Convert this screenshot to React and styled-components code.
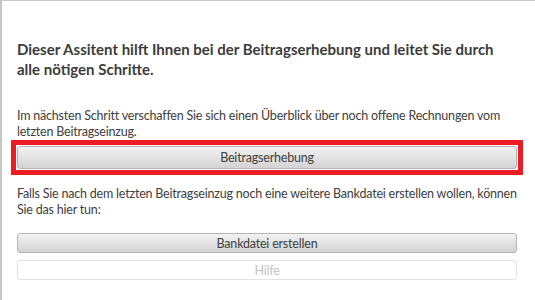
import React from "react";
import styled, { createGlobalStyle } from "styled-components";

const GlobalStyle = createGlobalStyle`
  html, body {
    margin: 0;
    padding: 0;
    background: #ffffff;
  }
  body {
    font-family: Lato, "Liberation Sans", sans-serif;
    color: #3f3f3f;
  }
`;

const StyledFrame = styled.div`
  box-sizing: border-box;
  width: 535px;
  height: 300px;
  border-top: 1px solid #c6c6c6;
  border-left: 2px solid #c6c6c6;
  padding: 38px 18px 0 15px;
  display: flex;
  flex-direction: column;
`;

const StyledHeading = styled.h1`
  margin: 0;
  font-size: 15px;
  line-height: 20px;
  font-weight: 700;
  color: #3c3c3c;
  white-space: nowrap;
`;

const StyledText = styled.p`
  margin: ${(p) => p.$top || 0}px 0 0;
  font-size: 12.5px;
  letter-spacing: -0.2px;
  line-height: 16px;
  color: #404040;
  white-space: nowrap;
`;

const StyledHighlight = styled.div`
  margin: 0 -6px;
  padding: 1px;
  border: 5px solid #ec1c24;
  display: flex;
  flex-direction: column;
`;

const StyledButton = styled.button`
  box-sizing: border-box;
  width: 100%;
  height: ${(p) => p.$height || 20}px;
  margin-top: ${(p) => p.$top || 0}px;
  padding: 0;
  font-family: Lato, "Liberation Sans", sans-serif;
  font-size: 12.5px;
  letter-spacing: -0.2px;
  color: #404040;
  border: 1px solid #b4b4b4;
  border-radius: 3px;
  background: linear-gradient(#f2f2f2, #d3d3d3);

  &:disabled {
    color: #c4c4c4;
    border-color: #e2e2e2;
    background: #ffffff;
  }
`;

const App = () => (
  <>
    <GlobalStyle />
    <StyledFrame>
      <StyledHeading>
        Dieser Assitent hilft Ihnen bei der Beitragserhebung und leitet Sie durch
        <br />
        alle nötigen Schritte.
      </StyledHeading>
      <StyledText $top={29}>
        Im nächsten Schritt verschaffen Sie sich einen Überblick über noch offene Rechnungen vom
        <br />
        letzten Beitragseinzug.
      </StyledText>
      <StyledHighlight>
        <StyledButton $height={23}>Beitragserhebung</StyledButton>
      </StyledHighlight>
      <StyledText $top={11}>
        Falls Sie nach dem letzten Beitragseinzug noch eine weitere Bankdatei erstellen wollen, können
        <br />
        Sie das hier tun:
      </StyledText>
      <StyledButton $top={15}>Bankdatei erstellen</StyledButton>
      <StyledButton $top={7} disabled>
        Hilfe
      </StyledButton>
    </StyledFrame>
  </>
);

export default App;
